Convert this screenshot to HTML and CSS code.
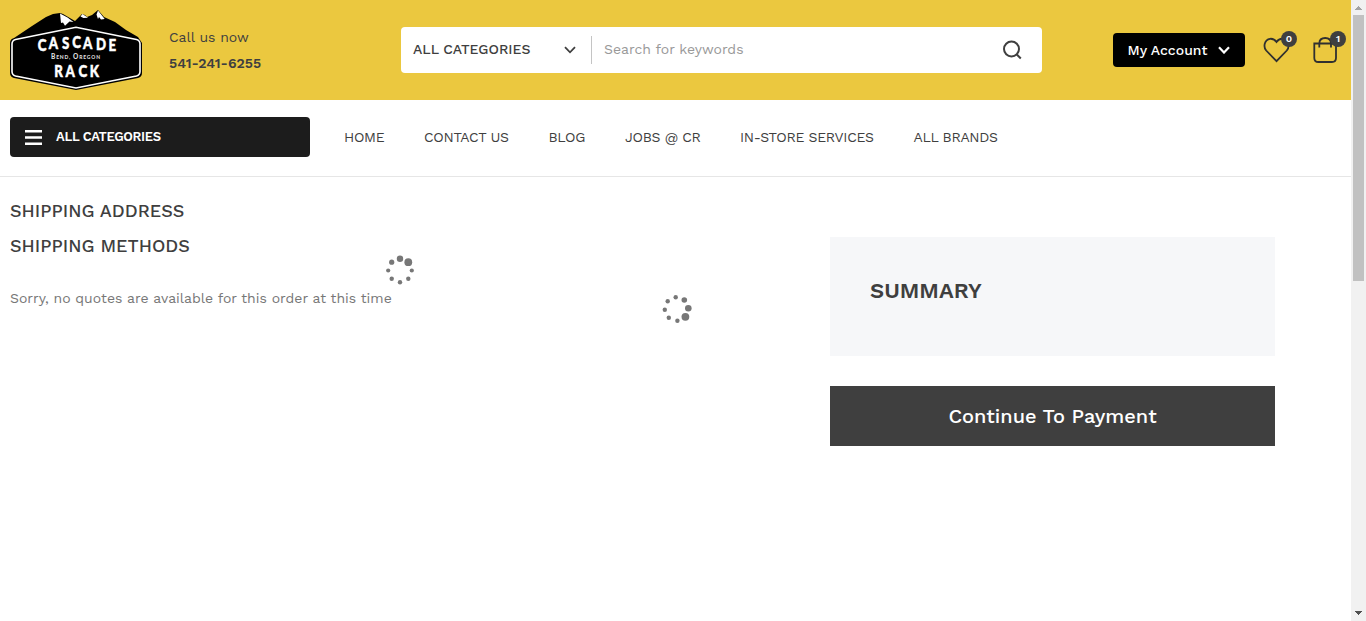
FILE: index.html
```html
<!DOCTYPE html>
<html lang="en">
<head>
<meta charset="utf-8">
<title>Cascade Rack - Checkout</title>
<link rel="stylesheet" href="styles.css">
</head>
<body>
<div class="page">
  <header class="header">
    <svg class="logo" viewBox="10 10 132 80" role="img" aria-label="Cascade Rack">
      <path d="M14 38 32 26 46 17 53 14 60 13 63 14 75 21 82 14 85 15 87 17 92 15 98 10 104 17 115 22 126 30 138 37 142 43V73Q142 77 138 78L76 90 14 78Q10 77 10 73V43Q10 39 14 38Z"/>
      <path fill="#fff" d="M60 13.500 67.500 17.500 73.500 22 69.500 21.500 65 25.800 63 22.500 61 23ZM82.500 14 88 17.800 83.500 18 80.500 16.500ZM98 10.500 104.700 19 101 19.500 99 17 98 19 96.500 14.500Z"/>
      <path fill="#000" stroke="#fff" stroke-width="1.600" d="M15.500 39.500 76 27.300 136.500 39.500Q140 40.500 140 44V71.500Q140 75 136.500 76L76 88 15.500 76Q12 75 12 71.500V44Q12 40.500 15.500 39.500Z"/>
      <text class="logo-name" transform="scale(.78 1)" x="48.500 62.500 79.500 92.500 106.500 123 139" y="51 49.500 48.800 48.500 48.800 50 50.800">CASCADE</text>
      <text class="logo-place" x="51" y="59.300" textLength="49"><tspan class="cap">B</tspan>END, <tspan class="cap">O</tspan>REGON</text>
      <text class="logo-name" transform="scale(.78 1)" x="69.500 84 100.500 115" y="77 77 77 77">RACK</text>
    </svg>
    <div class="call"><span class="call-label">Call us now</span><b class="call-number">541-241-6255</b></div>
    <form class="search">
      <span class="search-cat">ALL CATEGORIES</span>
      <svg class="search-chev" viewBox="0 0 12 8"><path d="M1 1.200 6 6.300 11 1.200"/></svg>
      <span class="search-hint">Search for keywords</span>
      <svg class="search-icon" viewBox="0 0 20 20"><circle cx="9.500" cy="9" r="7.500"/><path d="M14.800 14.500 18.800 18.500"/></svg>
    </form>
    <div class="account"><span class="account-text">My Account</span><svg class="account-chev" viewBox="0 0 12 8"><path d="M1 1.200 6 6.500 11 1.200"/></svg></div>
    <div class="tool heart">
      <svg class="tool-icon" width="28" height="26" viewBox="0 0 28 26"><path d="M13.500 24.200 3.200 13.500C0 9.700 1.500 2.700 7 1.800 10 1.500 12 2.800 13.500 5 15 2.800 17 1.500 20 1.800 25.500 2.700 27 9.700 23.800 13.500Z"/></svg>
      <span class="badge">0</span>
    </div>
    <div class="tool bag">
      <svg class="tool-icon" width="26" height="27" viewBox="0 0 26 27"><path d="M2.300 6.500H24V21Q24 25 20 25H6.300Q2.300 25 2.300 21ZM7.300 10.500V6.500Q7.500 1 13.200 1T19 6.500V10.500"/></svg>
      <span class="badge">1</span>
    </div>
  </header>
  <nav class="nav">
    <div class="menu"><svg class="menu-icon" viewBox="0 0 17 15"><path d="M0 1.300H17M0 7.500H17M0 13.700H17"/></svg><b class="menu-text">ALL CATEGORIES</b></div>
    <a class="link home">HOME</a><a class="link contact">CONTACT US</a><a class="link blog">BLOG</a><a class="link jobs">JOBS @ CR</a><a class="link services">IN-STORE SERVICES</a><a class="link brands">ALL BRANDS</a>
  </nav>
  <main class="main">
    <section class="shipping">
      <h2 class="title address">SHIPPING ADDRESS</h2>
      <h2 class="title methods">SHIPPING METHODS</h2>
      <p class="note">Sorry, no quotes are available for this order at this time</p>
      <svg class="spinner first" viewBox="-15 -15.500 30 30"><circle cy="-11.800" r="3.200"/><circle cx="8.300" cy="-8.300" r="3.900"/><circle cx="11.800" r="2.100"/><circle cx="8.300" cy="8.300" r="2.200"/><circle cy="11.800" r="2.200"/><circle cx="-8.300" cy="8.300" r="2.200"/><circle cx="-11.800" r="2.100"/><circle cx="-8.300" cy="-8.300" r="2.600"/></svg>
      <svg class="spinner second" viewBox="-15 -15 30 30"><circle cx="-1.300" cy="-11.700" r="2.200"/><circle cx="7.300" cy="-9" r="2.800"/><circle cx="11.300" cy="-.8" r="3.300"/><circle cx="8.400" cy="7.800" r="3.900"/><circle cx=".4" cy="11.700" r="2.200"/><circle cx="-8.200" cy="8.800" r="2.200"/><circle cx="-12.200" cy=".7" r="2.200"/><circle cx="-9.300" cy="-7.800" r="2.200"/></svg>
    </section>
    <aside class="side">
      <div class="summary">SUMMARY</div>
      <div class="pay"><span class="pay-text">Continue To Payment</span></div>
    </aside>
  </main>
</div>
<div class="scroll">
  <svg class="arrow" viewBox="0 0 7 4"><path fill="#a3a3a3" d="M3 0H4V1H5V2H6V3H7V4H0V3H1V2H2V1H3Z"/></svg>
  <div class="thumb"></div>
  <svg class="arrow down" viewBox="0 0 7 4"><path fill="#505050" d="M0 0H7V1H6V2H5V3H4V4H3V3H2V2H1V1H0Z"/></svg>
</div>
</body>
</html>
```
FILE: styles.css
```css
* { box-sizing: border-box; }
body { margin: 0; width: 1366px; height: 621px; overflow: hidden; display: flex; background: #fff; color: #3f3f3f; font-family: "Work Sans", Inter, "Liberation Sans", sans-serif; font-size: 14px; white-space: nowrap; }
svg { display: block; flex: none; }
.page { width: 1351px; }
.header { height: 100px; display: flex; align-items: center; background: #ebc83f; padding-left: 10px; }
.logo { width: 132px; height: 80px; }
.logo-name { font: 900 17px Lato, sans-serif; fill: #fff; stroke: #fff; stroke-width: .5; }
.logo-place { font: 900 5px Lato, sans-serif; fill: #ddd; }
.cap { font-size: 6.500px; }
.call { width: 232px; margin-left: 27px; line-height: 26px; display: flex; flex-direction: column; }
.call-number { font-weight: 600; }
.search { width: 641px; height: 46px; background: #fff; border-radius: 4px; display: flex; align-items: center; padding: 0 20px 0 12px; }
.search-cat { width: 151px; padding-bottom: 2px; font-weight: 500; }
.search-chev { width: 12px; height: 8px; fill: none; stroke: #3f3f3f; stroke-width: 1.8; }
.search-hint { height: 28px; line-height: 27px; margin-left: 15px; padding-left: 12px; border-left: 1px solid #c4c4c4; color: #999; }
.search-icon { width: 20px; height: 20px; margin-left: auto; fill: none; stroke: #3f3f3f; stroke-width: 2; }
.account { width: 132px; height: 34px; margin-left: 71px; padding: 0 15px 0 14.5px; background: #000; color: #fff; border-radius: 4px; display: flex; align-items: center; justify-content: space-between; }
.account-text { font-weight: 500; }
.account-chev { width: 12px; height: 8px; fill: none; stroke: #fff; stroke-width: 2.2; }
.tool { position: relative; }
.tool-icon { fill: none; stroke: #303030; stroke-width: 1.8; }
.heart { margin-left: 18px; }
.bag { margin-left: 21px; }
.badge { position: absolute; width: 16px; height: 16px; border-radius: 50%; background: #3f3f3f; color: #fff; font-size: 10px; font-weight: 600; line-height: 16px; text-align: center; }
.heart .badge { left: 18px; top: -6px; }
.bag .badge { left: 18px; top: -6px; }
.nav { height: 77px; border-bottom: 1px solid #e6e6e6; padding-left: 10px; display: flex; align-items: center; }
.menu { width: 300px; height: 40px; margin: 0 34px 3px 0; padding-left: 15px; background: #1c1c1c; color: #fff; border-radius: 4px; display: flex; align-items: center; }
.menu-icon { width: 17px; height: 15px; margin: 1px 14px 0 0; stroke: #fff; stroke-width: 2.6; }
.menu-text { font-size: 13px; font-weight: 600; letter-spacing: -.33px; }
.link { padding-bottom: 2px; letter-spacing: -.32px; }
.home { width: 80px; }
.contact { width: 124.500px; }
.blog { width: 76.500px; }
.jobs { width: 115px; }
.services { width: 173.500px; }
.main { display: flex; }
.shipping { position: relative; width: 830px; padding: 16px 0 0 10px; }
.title { margin: 0; height: 35px; line-height: 35px; font-size: 18px; font-weight: 500; }
.note { margin: 26px 0 0; line-height: 18px; color: #777; }
.spinner { position: absolute; width: 30px; height: 30px; fill: #777; }
.first { left: 385px; top: 78px; }
.second { left: 662px; top: 117px; }
.side { width: 445px; padding-top: 60px; }
.summary { height: 119px; padding: 40px; line-height: 28px; background: #f6f7f9; font-size: 22px; font-weight: 600; }
.pay { height: 60px; margin-top: 30px; background: #3f3f3f; color: #fff; display: flex; align-items: center; justify-content: center; font-size: 20px; font-weight: 500; }
.scroll { width: 15px; height: 621px; background: #f1f1f1; display: flex; flex-direction: column; align-items: center; padding: 6px 0; }
.arrow { width: 7px; height: 4px; }
.thumb { width: 11px; height: 266px; margin-top: 5px; background: #c1c1c1; }
.down { margin-top: auto; }
```
